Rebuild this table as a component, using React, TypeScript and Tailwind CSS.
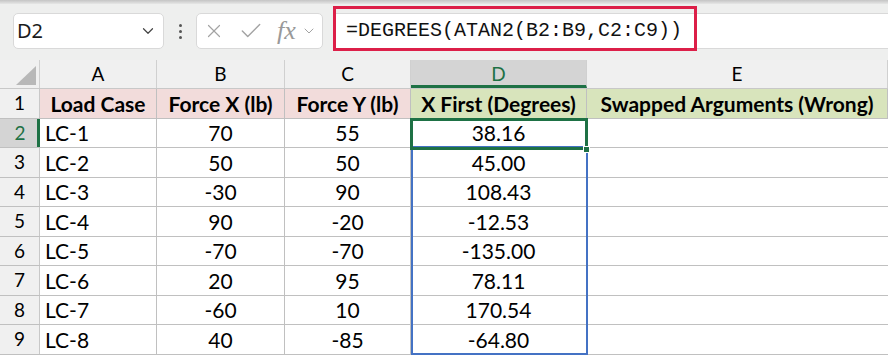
import { ChevronDown, X, Check } from 'lucide-react';

const cols = ['A', 'B', 'C', 'D', 'E'];
const widths = ['w-[117px]', 'w-[128px]', 'w-[126px]', 'w-[176px]', 'w-[301px]'];

const rows: string[][] = [
  ['LC-1', '70', '55', '38.16'],
  ['LC-2', '50', '50', '45.00'],
  ['LC-3', '-30', '90', '108.43'],
  ['LC-4', '90', '-20', '-12.53'],
  ['LC-5', '-70', '-70', '-135.00'],
  ['LC-6', '20', '95', '78.11'],
  ['LC-7', '-60', '10', '170.54'],
  ['LC-8', '40', '-85', '-64.80'],
];

const headers = ['Load Case', 'Force X (lb)', 'Force Y (lb)', 'X First (Degrees)', 'Swapped Arguments (Wrong)'];

// row heights alternate so 8 data rows + header fill 89..355
const rowH = ['h-[29px]', 'h-[30px]'];

export default function App() {
  return (
    <div className="w-[888px] h-[358px] overflow-hidden bg-white font-['Lato',sans-serif] text-black">
      {/* formula bar */}
      <div className="relative h-[60px] bg-[#eeefee]">
        <div className="h-[4px] bg-gradient-to-b from-[#c4c4c4] to-[#e6e7e6]" />
        <div className="flex items-start">
          <div className="ml-[13px] mt-[9px] w-[151px] h-[36px] rounded-[5px] border border-[#d9d9d9] bg-white flex items-center justify-between pl-[3px] pr-[6px]">
            <span className="font-['Noto_Sans',sans-serif] text-[20px] text-[#1b1b1b]">D2</span>
            <ChevronDown size={18} strokeWidth={1.6} className="text-[#444]" />
          </div>
          <div className="w-[32px] h-[36px] mt-[9px] flex flex-col items-center justify-center gap-[3px]">
            <span className="w-[3px] h-[3px] rounded-full bg-[#555]" />
            <span className="w-[3px] h-[3px] rounded-full bg-[#555]" />
            <span className="w-[3px] h-[3px] rounded-full bg-[#555]" />
          </div>
          <div className="mt-[9px] w-[127px] h-[36px] rounded-[5px] border border-[#d9d9d9] bg-white flex items-center pl-[6px] text-[#a3a3a3]">
            <X size={22} strokeWidth={1.3} />
            <Check size={26} strokeWidth={1.3} className="ml-[13px]" />
            <span className="ml-[13px] font-['Liberation_Serif',serif] italic text-[26px] leading-none text-[#999]">fx</span>
            <ChevronDown size={16} strokeWidth={1.5} className="ml-[5px]" />
          </div>
          <div className="ml-[10px] mt-[9px] flex-1 h-[36px] bg-white border-y border-l border-[#d9d9d9] flex items-center pl-[12px]">
            <span className="font-['Liberation_Mono',monospace] text-[20px] text-[#111]">=DEGREES(ATAN2(B2:B9,C2:C9))</span>
          </div>
        </div>
        {/* red annotation box */}
        <div className="absolute left-[333px] top-[6px] w-[364px] h-[45px] border-[3px] border-[#dc1f48]" />
      </div>

      {/* grid */}
      <div className="relative">
        {/* column header row */}
        <div className="flex h-[29px] bg-[#f0f0f0] border-b border-[#c8c8c8]">
          <div className="w-[40px] relative border-r border-[#d0d0d0]">
            <svg width="20" height="19" className="absolute left-[16px] top-[6px]">
              <polygon points="20,0 20,19 0,19" fill="#b8b8b8" />
            </svg>
          </div>
          {cols.map((c, i) => (
            <div
              key={c}
              className={`${widths[i]} flex items-center justify-center text-[19px] border-r border-[#d0d0d0] ${
                c === 'D' ? 'bg-[#d4d4d4] text-[#1e7145] border-b-[3px] border-b-[#1e7145] pt-[3px]' : ''
              }`}
            >
              {c}
            </div>
          ))}
        </div>

        {/* row 1 headers */}
        <div className="flex h-[30px] border-b border-[#c0c0c0]">
          <div className="w-[40px] bg-[#f0f0f0] border-r border-[#c8c8c8] flex items-center justify-center text-[19px]">1</div>
          {headers.map((h, i) => (
            <div
              key={h}
              className={`${widths[i]} flex items-center justify-center font-bold text-[21px] border-r border-[#c0c0c0] ${
                i < 3 ? 'bg-[#f2dcdb]' : 'bg-[#d8e4bc]'
              }`}
            >
              {h}
            </div>
          ))}
        </div>

        {rows.map((r, ri) => {
          const sel = ri === 0;
          return (
            <div key={ri} className={`flex ${rowH[ri % 2]} border-b border-[#c0c0c0]`}>
              <div
                className={`w-[40px] flex items-center justify-center text-[19px] ${
                  sel ? 'bg-[#d4d4d4] text-[#1e7145] border-r-[3px] border-[#1e7145] pl-[3px]' : 'bg-[#f0f0f0] border-r border-[#c8c8c8]'
                }`}
              >
                {ri + 2}
              </div>
              <div className={`${widths[0]} flex items-center pl-[5px] text-[21px] border-r border-[#c0c0c0]`}>{r[0]}</div>
              <div className={`${widths[1]} flex items-center justify-center text-[21px] border-r border-[#c0c0c0]`}>{r[1]}</div>
              <div className={`${widths[2]} flex items-center justify-center text-[21px] border-r border-[#c0c0c0]`}>{r[2]}</div>
              <div className={`${widths[3]} flex items-center justify-center text-[21px] border-r border-[#c0c0c0]`}>{r[3]}</div>
              <div className={`${widths[4]}`} />
            </div>
          );
        })}

        {/* selection range outline D3:D9 */}
        <div className="absolute left-[411px] top-[86px] w-[177px] h-[209px] border-[2px] border-[#4472c4]" />
        {/* active cell D2 */}
        <div className="absolute left-[410px] top-[58px] w-[178px] h-[32px] border-[3px] border-[#1e7145]" />
        <div className="absolute left-[583px] top-[86px] w-[7px] h-[7px] bg-[#1e7145] border border-white" />
      </div>
    </div>
  );
}
